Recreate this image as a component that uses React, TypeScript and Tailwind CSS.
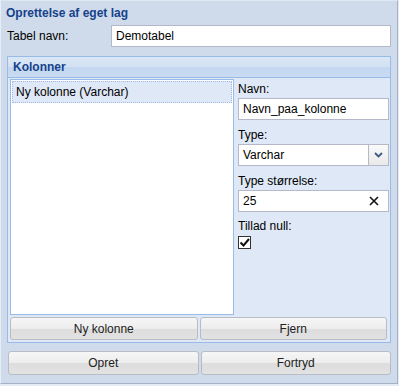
import { useState } from "react";

const btn =
  "flex h-[23px] flex-1 items-center justify-center rounded-[3px] border border-[#b8bcc4] bg-[linear-gradient(#f6f6f6_0%,#ededed_50%,#dddddd_51%,#e2e2e2_100%)] text-[12px] text-[#222] cursor-pointer";

const input =
  "h-[22px] w-full border border-[#b5b8c8] bg-white px-[4px] text-[12px] text-black outline-none";

export default function App() {
  const [name, setName] = useState("Demotabel");
  const [colName, setColName] = useState("Navn_paa_kolonne");
  const [size, setSize] = useState("25");
  const [nullable, setNullable] = useState(true);

  return (
    <div className="h-[386px] w-[399px] bg-[#e4ebf4] font-['Liberation_Sans',Arial,sans-serif]">
      <div className="flex h-[384px] w-[398px] flex-col border-l border-t border-r border-b border-l-[#e6edf6] border-t-[#dfe7f2] border-r-[#a3b2c6] border-b-[#a3b2c6] bg-[#cfdbea]">
        {/* Title */}
        <div className="flex h-[24px] items-center pl-[5px] text-[12px] font-bold text-[#15428b]">
          Oprettelse af eget lag
        </div>

        <div className="flex flex-1 flex-col px-[6px]">
          {/* Tabel navn */}
          <div className="flex items-center">
            <label className="w-[104px] shrink-0 text-[12px] text-black">Tabel navn:</label>
            <input
              className={input}
              value={name}
              onChange={(e) => setName(e.target.value)}
            />
          </div>

          {/* Kolonner panel */}
          <div className="mt-[9px] flex h-[287px] flex-col border border-[#99bbe8] bg-[#dfe8f6]">
            <div className="flex h-[21px] items-center border-b border-[#99bbe8] bg-[linear-gradient(#dae6f5_0%,#d3e2f4_50%,#c3d7f1_51%,#c9dbf2_100%)] pl-[5px] text-[12px] font-bold text-[#15428b]">
              Kolonner
            </div>
            <div className="flex flex-1 flex-col px-[2px] pt-[1px] pb-[2px]">
              <div className="flex flex-1 gap-[4px]">
                {/* list */}
                <div className="h-[236px] w-[224px] shrink-0 border border-[#99bbe8] bg-white p-[1px]">
                  <div className="flex h-[22px] items-center border border-dotted border-[#a3bae9] bg-[#dfe8f6] pl-[3px] text-[12px] text-black">
                    Ny kolonne (Varchar)
                  </div>
                </div>

                {/* form */}
                <div className="flex w-[151px] flex-col pt-[2px] text-[12px] text-black">
                  <label className="h-[17px] leading-[17px]">Navn:</label>
                  <input
                    className={input}
                    value={colName}
                    onChange={(e) => setColName(e.target.value)}
                  />
                  <label className="mt-[6px] h-[18px] leading-[18px]">Type:</label>
                  <div className="flex h-[22px] border border-[#b5b8c8] bg-white">
                    <span className="flex flex-1 items-center px-[4px]">Varchar</span>
                    <span className="flex w-[20px] items-center justify-center border-l border-[#b5b8c8] bg-[linear-gradient(#fafafa,#e9e9e9)]">
                      <svg width="9" height="6" viewBox="0 0 9 6">
                        <path d="M1 1l3.5 3.5L8 1" fill="none" stroke="#3e5a82" strokeWidth="1.8" />
                      </svg>
                    </span>
                  </div>
                  <label className="mt-[6px] h-[18px] leading-[18px]">Type størrelse:</label>
                  <div className="flex h-[22px] items-center border border-[#b5b8c8] bg-white">
                    <input
                      className="min-w-0 flex-1 px-[4px] text-[12px] outline-none"
                      value={size}
                      onChange={(e) => setSize(e.target.value)}
                    />
                    <svg width="16" height="16" viewBox="0 0 16 16" className="mr-[6px]">
                      <path d="M4 4l8 8M12 4l-8 8" stroke="#111" strokeWidth="1.6" />
                    </svg>
                  </div>
                  <label className="mt-[6px] h-[17px] leading-[17px]">Tillad null:</label>
                  <button
                    type="button"
                    onClick={() => setNullable(!nullable)}
                    className="mt-[1px] flex h-[13px] w-[13px] items-center justify-center border border-[#333] bg-white"
                  >
                    {nullable && (
                      <svg width="11" height="11" viewBox="0 0 11 11">
                        <path d="M1.5 5.5l3 3L10 2" fill="none" stroke="#111" strokeWidth="2" />
                      </svg>
                    )}
                  </button>
                </div>
              </div>

              <div className="mt-[2px] flex gap-[2px] pr-[1px]">
                <button type="button" className={btn}>Ny kolonne</button>
                <button type="button" className={btn}>Fjern</button>
              </div>
            </div>
          </div>

          {/* Bottom buttons */}
          <div className="mt-[8px] flex gap-[2px] pl-[1px]">
            <button type="button" className={`${btn} h-[24px]`}>Opret</button>
            <button type="button" className={`${btn} h-[24px]`}>Fortryd</button>
          </div>
        </div>
      </div>
    </div>
  );
}
